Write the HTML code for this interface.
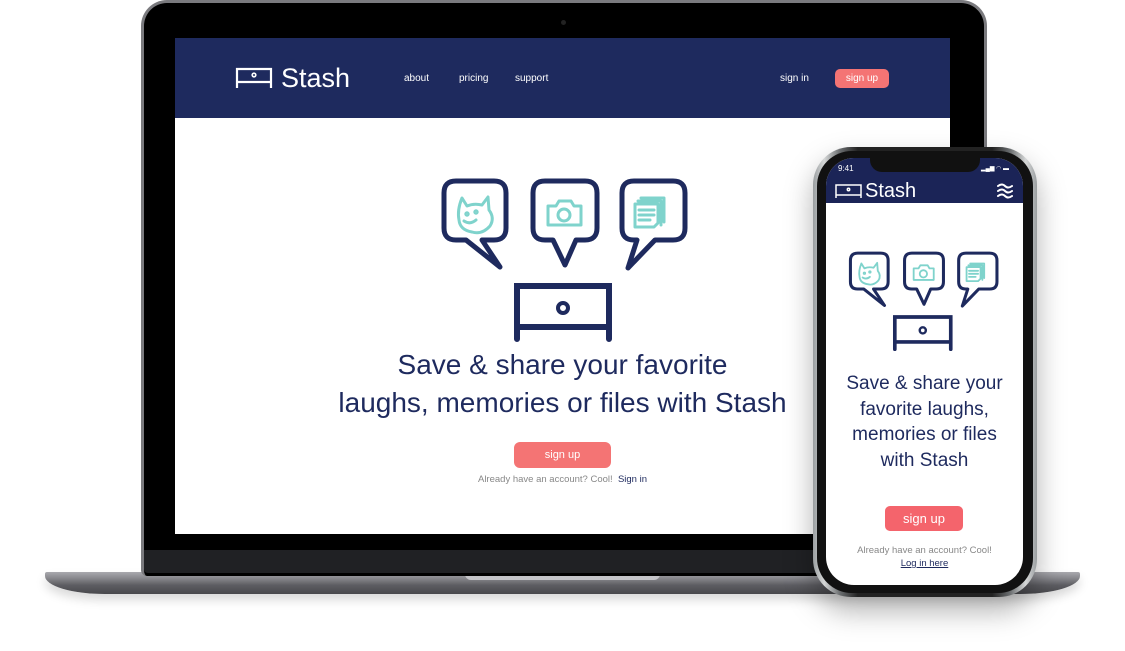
<!DOCTYPE html>
<html><head><meta charset="utf-8">
<style>
*{margin:0;padding:0;box-sizing:border-box}
body{width:1125px;height:651px;background:#fff;position:relative;overflow:hidden;font-family:"Liberation Sans",sans-serif}
.a{position:absolute}
.c{text-align:center;white-space:nowrap}
</style></head><body>
<svg width="0" height="0" style="position:absolute">
<defs>
<g id="scene">
 <g fill="#fff" stroke="#1e2a5e" stroke-width="5" stroke-linejoin="round">
  <path d="M16 3H54Q66 3 66 15V50Q66 62 54 62H42L60 89L26 62H16Q4 62 4 50V15Q4 3 16 3Z"/>
  <path d="M105 3H145Q157 3 157 15V50Q157 62 145 62H136L125 87L113 62H105Q93 62 93 50V15Q93 3 105 3Z"/>
  <path d="M194 3H233Q245 3 245 15V50Q245 62 233 62H215L188 90L197 62H194Q182 62 182 50V15Q182 3 194 3Z"/>
 </g>
 <g fill="none" stroke="#7fd3cc" stroke-width="3" stroke-linecap="round" stroke-linejoin="round">
  <path d="M22 20L27 28Q34 25 42 27L48 19L49 32Q55 40 50 48Q42 57 32 54Q20 52 19 42Q17 32 22 20Z"/>
  <circle cx="27" cy="36" r="1.2"/><circle cx="36" cy="34" r="1.2"/><path d="M24 43Q30 47 36 42"/>
  <path d="M108 28H116L119 23H131L134 28H141V47H108Z"/><circle cx="124" cy="37" r="6"/>
  <path d="M198 23H221V47M201 20H224V44M195 26H218V45L214 49H195Z"/><path d="M199 32H214M199 37H214M199 42H210"/>
 </g>
 <g fill="none" stroke="#1e2a5e" stroke-width="6" stroke-linecap="round">
  <path d="M77 161V108H169V161M77 149H169"/>
  <circle cx="123" cy="130" r="5" stroke-width="4"/>
 </g>
</g>
</defs></svg>

<!-- laptop base -->
<div class="a" style="left:45px;top:572px;width:1035px;height:22px;border-radius:2px 2px 60px 60px/2px 2px 18px 18px;background:linear-gradient(#a9a9ae 0,#8c8c91 25%,#5d5d62 60%,#48484c 100%);box-shadow:0 6px 10px rgba(0,0,0,.15)"></div>
<div class="a" style="left:465px;top:572px;width:195px;height:8px;background:#c4c4c8;border-radius:0 0 6px 6px"></div>
<!-- laptop lid -->
<div class="a" style="left:141px;top:0;width:846px;height:576px;background:#000;border-radius:26px 26px 6px 6px;border:3px solid #7a7a7e;border-bottom:none"></div>
<div class="a" style="left:144px;top:550px;width:840px;height:23px;background:#202124;border-radius:0 0 4px 4px"></div>
<div class="a" style="left:561px;top:20px;width:5px;height:5px;border-radius:50%;background:#222"></div>
<!-- laptop screen -->
<div class="a" style="left:175px;top:38px;width:775px;height:496px;background:#fff;overflow:hidden">
 <div class="a" style="left:0;top:0;width:775px;height:80px;background:#1e2a5e"></div>
 <svg class="a" style="left:60px;top:29px" width="38" height="22" viewBox="0 0 38 22"><g fill="none" stroke="#fff" stroke-width="2.2"><path d="M2 21V2H36V21M2 15H36"/><circle cx="19" cy="8" r="1.8" stroke-width="1.6"/></g></svg>
 <div class="a" style="left:106px;top:24px;color:#fff;font-size:27px;line-height:32px">Stash</div>
 <div class="a" style="left:229px;top:35px;color:#fff;font-size:10px">about</div>
 <div class="a" style="left:284px;top:35px;color:#fff;font-size:10px">pricing</div>
 <div class="a" style="left:340px;top:35px;color:#fff;font-size:10px">support</div>
 <div class="a" style="left:605px;top:35px;color:#fff;font-size:10px">sign in</div>
 <div class="a c" style="left:660px;top:31px;width:54px;height:19px;border-radius:5px;background:#f47474;color:#fff;font-size:10px;line-height:19px">sign up</div>
 <svg class="a" style="left:265px;top:140px" width="250" height="165" viewBox="0 0 250 165"><use href="#scene"/></svg>
 <div class="a c" style="left:0;width:775px;top:308px;color:#1e2a5e;font-size:28px;line-height:38px">Save &amp; share your favorite<br>laughs, memories or files with Stash</div>
 <div class="a c" style="left:339px;top:404px;width:97px;height:26px;border-radius:6px;background:#f47474;color:#fff;font-size:11px;line-height:26px">sign up</div>
 <div class="a c" style="left:0;width:775px;top:436px;color:#888;font-size:9.5px">Already have an account? Cool!&nbsp; <span style="color:#1e2a5e">Sign in</span></div>
</div>

<!-- phone -->
<div class="a" style="left:813px;top:147px;width:224px;height:450px;border-radius:38px;background:linear-gradient(90deg,#9a9ea0,#d6d8d8 5%,#6b6e70 12%,#222 20%,#222 80%,#6b6e70 88%,#d6d8d8 95%,#9a9ea0);filter:drop-shadow(0 14px 14px rgba(0,0,0,.3))"></div>
<div class="a" style="left:817px;top:151px;width:216px;height:442px;border-radius:35px;background:#111"></div>
<div class="a" style="left:826px;top:158px;width:197px;height:427px;border-radius:28px;background:#fff;overflow:hidden">
 <div class="a" style="left:0;top:0;width:197px;height:45px;background:#1b2457"></div>
 <div class="a" style="left:44px;top:-2px;width:110px;height:16px;background:#111;border-radius:0 0 12px 12px"></div>
 <div class="a" style="left:12px;top:6px;color:#fff;font-size:8px">9:41</div>
 <div class="a" style="left:155px;top:7px;color:#fff;font-size:6px">▂▄▆ ◠ ▬</div>
 <svg class="a" style="left:9px;top:26px" width="27" height="15" viewBox="0 0 27 15"><g fill="none" stroke="#fff" stroke-width="1.5"><path d="M1 14V1H26V14M1 11H26"/><circle cx="13.5" cy="5.5" r="1.2"/></g></svg>
 <div class="a" style="left:39px;top:22px;color:#fff;font-size:20px;line-height:22px">Stash</div>
 <svg class="a" style="left:171px;top:25px" width="16" height="16" viewBox="0 0 16 16"><g fill="none" stroke="#fff" stroke-width="2" stroke-linecap="round"><path d="M1 3Q5 0 8 3T15 3M1 8Q5 5 8 8T15 8M1 13Q5 10 8 13T15 13"/></g></svg>
 <svg class="a" style="left:22px;top:93px" width="152" height="101" viewBox="0 0 250 165"><use href="#scene"/></svg>
 <div class="a c" style="left:0;width:197px;top:213px;color:#1e2a5e;font-size:19px;line-height:25.5px">Save &amp; share your<br>favorite laughs,<br>memories or files<br>with Stash</div>
 <div class="a c" style="left:59px;top:348px;width:78px;height:25px;border-radius:5px;background:#f4646c;color:#fff;font-size:13px;line-height:25px">sign up</div>
 <div class="a c" style="left:0;width:197px;top:386px;color:#888;font-size:9.5px;line-height:13px">Already have an account? Cool!<br><span style="color:#1e2a5e;text-decoration:underline">Log in here</span></div>
</div>
</body></html>
